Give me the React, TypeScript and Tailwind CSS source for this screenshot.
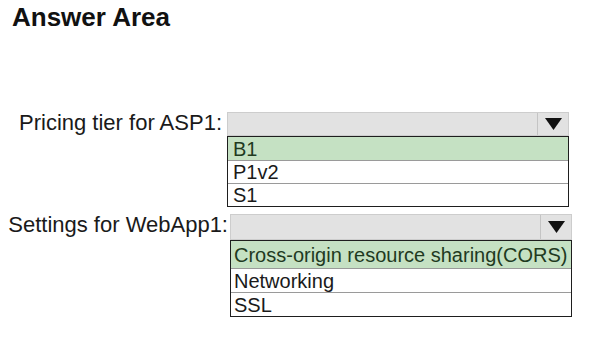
const Arrow = () => (
  <svg width="17" height="12" viewBox="0 0 17 12">
    <polygon points="0,0 17,0 8.5,12" fill="#111" />
  </svg>
);

type Row = { text: string; h: string; selected?: boolean };

const Dropdown = ({ barH, rows, pad }: { barH: string; rows: Row[]; pad: string }) => (
  <div className="w-[342px]">
    <div className={`flex ${barH} border border-[#cdcdcd] bg-[#e2e2e2]`}>
      <div className="flex-1" />
      <div className="flex w-[31px] items-center justify-center border-l border-[#c4c4c4]">
        <Arrow />
      </div>
    </div>
    <div className="border border-[#1e1e1e] bg-white">
      {rows.map((r, i) => (
        <div
          key={r.text}
          className={`${r.h} ${pad} flex items-center whitespace-nowrap text-[20px] leading-[22px] ${i > 0 ? 'border-t border-[#9a9a9a]' : ''} ${r.selected ? 'bg-[#c5e1c3] text-[#1f3a1f]' : 'text-[#1a1a1a]'}`}
        >
          {r.text}
        </div>
      ))}
    </div>
  </div>
);

export default function App() {
  return (
    <div className="h-[351px] w-[606px] bg-white font-['Liberation_Sans',Arial,sans-serif] text-[#1a1a1a]">
      <h1 className="pl-[12px] pt-[2px] text-[26px] font-bold leading-[30px] text-[#111]">Answer Area</h1>

      <div className="mt-[80px] flex">
        <div className="w-[227px] whitespace-nowrap pr-[5px] text-right text-[22px] leading-[22px]">Pricing tier for ASP1:</div>
        <Dropdown
          barH="h-[24px]"
          pad="pl-[5px]"
          rows={[
            { text: 'B1', h: 'h-[23px]', selected: true },
            { text: 'P1v2', h: 'h-[23px]' },
            { text: 'S1', h: 'h-[23px]' },
          ]}
        />
      </div>

      <div className="mt-[7px] flex">
        <div className="w-[230px] whitespace-nowrap pr-[2px] text-right text-[22px] leading-[22px]">Settings for WebApp1:</div>
        <Dropdown
          barH="h-[26px]"
          pad="pl-[3px]"
          rows={[
            { text: 'Cross-origin resource sharing(CORS)', h: 'h-[27px]', selected: true },
            { text: 'Networking', h: 'h-[24px]' },
            { text: 'SSL', h: 'h-[24px]' },
          ]}
        />
      </div>
    </div>
  );
}
